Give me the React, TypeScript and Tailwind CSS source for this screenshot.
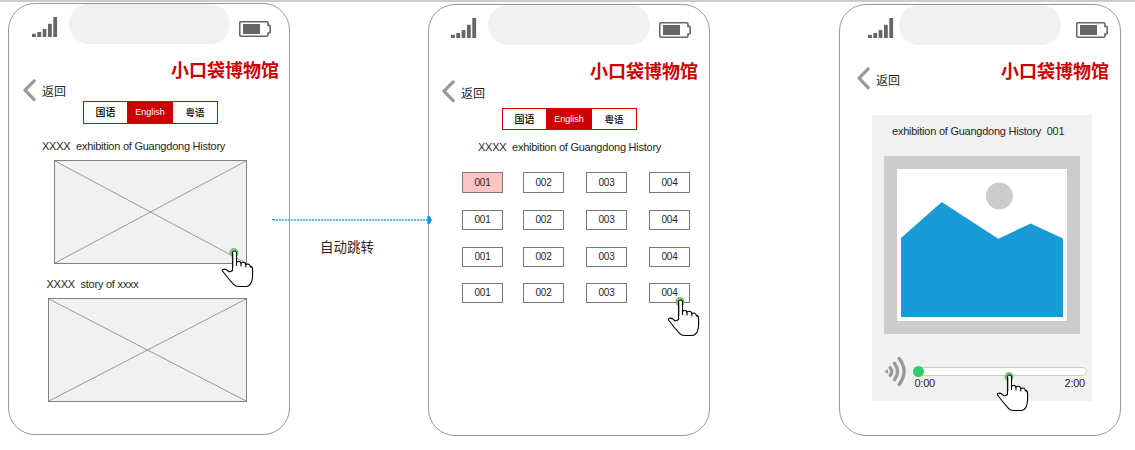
import type { ReactNode } from "react";

function Signal() {
  return (
    <svg width="26" height="21" viewBox="0 0 26 21" className="shrink-0" fill="#666">
      <rect x="0" y="16.8" width="3.9" height="3.2" />
      <rect x="5.3" y="15" width="3.9" height="5" />
      <rect x="10.7" y="12" width="3.7" height="8" />
      <rect x="16" y="6.8" width="3.8" height="13.2" />
      <rect x="21.3" y="0" width="3.8" height="20" />
    </svg>
  );
}

function Battery() {
  return (
    <svg width="33" height="17" viewBox="0 0 33 17" className="shrink-0" fill="none">
      <path d="M2 .8H27.5Q29 .8 29 2.3V4.4H30.2Q31.2 4.4 31.2 5.4V11Q31.2 12 30.2 12H29V13.7Q29 15.2 27.5 15.2H2Q.7 15.2 .7 13.7V2.3Q.7 .8 2 .8Z" stroke="#666" strokeWidth="1.6" />
      <rect x="4" y="3" width="17" height="10" fill="#666" />
    </svg>
  );
}

function Chevron() {
  return (
    <svg width="13" height="23" viewBox="0 0 13 23" className="shrink-0" fill="none">
      <path d="M11.2 1.9L2 11.2L11.2 20.7" stroke="#999" strokeWidth="3.2" strokeLinecap="round" strokeLinejoin="round" />
    </svg>
  );
}

function Hand({ className }: { className: string }) {
  return (
    <svg width="36" height="42" viewBox="0 0 36 42" className={`absolute ${className}`}>
      <circle cx="14" cy="5.7" r="4.6" fill="#7cc07c" />
      <path
        d="M12.5 6Q12.5 4 14.3 4Q16.5 4 16.5 6V18.5V16Q17 14.2 18.6 14.2Q20.9 14.2 21 17.3V19V16.2Q22 15 23.6 15.3Q25.8 15.7 25.8 18.2V20V17.8Q27.3 16.6 28.8 17.2Q30.3 17.8 30.4 20V19.4Q32.6 19.6 32.6 22.5V29Q32.3 33 31.3 35.5Q29.3 39.5 26 39.5H18.5Q15.5 39.5 13.5 37.3L8 31L2.5 24Q1.8 22.5 3.7 22.2Q6 21.8 8 24Q9.6 25.6 12.5 23.5Z"
        fill="#fff"
        stroke="#000"
        strokeWidth="1.1"
        strokeLinejoin="round"
      />
      <path d="M13.4 6.5V20" stroke="#999" strokeWidth=".8" />
    </svg>
  );
}

interface PhoneProps {
  children: ReactNode;
  className: string;
  status: string;
  notch: string;
  battery: string;
}

function Phone({ children, className, status, notch, battery }: PhoneProps) {
  return (
    <section className={`relative box-border flex h-[432px] w-[282px] shrink-0 flex-col rounded-[27px] border border-[#999] bg-white ${className}`}>
      <div className={`flex h-10 shrink-0 items-start ${status}`}>
        <div className="pt-[13px]"><Signal /></div>
        <div className={`h-full rounded-[20px] bg-[#f1f1f1] ${notch}`} />
        <div className={`pt-[17px] ${battery}`}><Battery /></div>
      </div>
      {children}
    </section>
  );
}

function Title({ className }: { className: string }) {
  return <h1 className={`h-[18px] shrink-0 whitespace-nowrap text-[18px] leading-[20px] font-bold text-[#c00] ${className}`}>小口袋博物馆</h1>;
}

function Back({ className, label }: { className: string; label: string }) {
  return (
    <div className={`flex h-[23px] shrink-0 items-start gap-[6px] ${className}`}>
      <Chevron />
      <span className={`text-[12px] leading-[14px] ${label}`}>返回</span>
    </div>
  );
}

function Tabs({ className }: { className: string }) {
  return (
    <div className={`flex w-[135px] shrink-0 border border-[#c00] text-[9px] leading-[20px] text-black ${className}`}>
      <span className="w-[43px] pt-[1px] text-center text-[10px] font-medium">国语</span>
      <span className="w-[46px] bg-[#c00] text-center text-white">English</span>
      <span className="w-[44px] pt-[1px] text-center text-[9.5px] font-medium">粤语</span>
    </div>
  );
}

function Caption({ children, className }: { children: string; className: string }) {
  return <p className={`h-3 shrink-0 whitespace-pre text-[11px] leading-[10px] tracking-[-0.24px] ${className}`}>{children}</p>;
}

function Placeholder({ className }: { className: string }) {
  return (
    <div className={`h-[104px] shrink-0 border border-[#808080] bg-[#f1f1f1] ${className}`}>
      <svg className="block h-full w-full" viewBox="0 0 100 100" preserveAspectRatio="none">
        <path d="M0 0L100 100M100 0L0 100" stroke="#999" strokeWidth="1" vectorEffect="non-scaling-stroke" />
      </svg>
    </div>
  );
}

function NumberRow({ first, className }: { first?: boolean; className: string }) {
  return (
    <div className={`grid shrink-0 grid-cols-[41px_41px_41px_41px] gap-x-[22px] text-center text-[10px] tracking-[-0.2px] ${first ? "leading-[19px]" : "leading-[17px]"} ${className}`}>
      <span className={`border border-[#797979] ${first ? "bg-[#ffc4c4]" : ""}`}>001</span>
      <span className="-ml-[2px] mr-[2px] border border-[#797979]">002</span>
      <span className="-ml-[2px] mr-[2px] border border-[#797979]">003</span>
      <span className="-ml-[2px] mr-[2px] border border-[#797979]">004</span>
    </div>
  );
}

function Landscape() {
  return (
    <svg width="170" height="152" viewBox="897 169 170 152" className="block">
      <rect x="897" y="169" width="170" height="152" fill="#fff" />
      <circle cx="999.4" cy="196" r="13.5" fill="#ccc" />
      <path d="M901 238L941.7 202L998.3 238.7L1030.7 223.4L1063 238.5V317H901Z" fill="#199bd7" />
    </svg>
  );
}

function Sound() {
  return (
    <svg width="24" height="32" viewBox="0 0 24 32" className="shrink-0" fill="none" stroke="#999" strokeWidth="3.3" strokeLinecap="round">
      <path d="M.5 15.5L3.6 13Q4.8 15.5 3.6 18Z" fill="#999" stroke="none" />
      <path d="M6.2 11.6Q9.2 15.5 6.2 19.4" />
      <path d="M10.4 7.2Q16.6 15.5 10.4 23.8" />
      <path d="M15.2 2.6Q25 15.5 15.2 28.4" />
    </svg>
  );
}

export default function App() {
  return (
    <main className="relative h-[450px] w-[1135px] overflow-hidden border-t-2 border-[#ccc] bg-white font-['Liberation_Sans','Noto_Sans_CJK_SC',sans-serif] text-[#262626]">
      <div className="flex items-start">
        <Phone className="mt-[1px] ml-[8px]" status="pl-[23px] gap-x-[9px]" notch="ml-[2px] w-[161px]" battery="">
          <Title className="mt-[17px] ml-[162px]" />
          <Back className="ml-[14px]" label="pt-[6px]" />
          <Tabs className="-mt-[1px] ml-[74px] h-[23px]" />
          <Caption className="mt-[17px] ml-[33px]">XXXX  exhibition of Guangdong History</Caption>
          <Placeholder className="mt-[7px] ml-[45px] w-[193px]" />
          <Caption className="mt-[15px] ml-[37.5px]">XXXX  story of xxxx</Caption>
          <Placeholder className="mt-[7px] ml-[39px] w-[199px]" />
          <Hand className="top-[243px] left-[211px]" />
        </Phone>

        <Phone className="mt-[2px] ml-[138px]" status="pl-[22px] gap-x-[9px]" notch="ml-[2px] w-[162px]" battery="">
          <Title className="mt-[17px] ml-[161px]" />
          <Back className="ml-[13px]" label="pt-[7px]" />
          <Tabs className="mt-[5px] ml-[73px] h-[22px]" />
          <Caption className="mt-[12px] ml-[49px]">XXXX  exhibition of Guangdong History</Caption>
          <NumberRow first className="mt-[18px] ml-[33px] h-[21px]" />
          <NumberRow className="mt-[17px] ml-[33px] h-5" />
          <NumberRow className="mt-[17px] ml-[33px] h-5" />
          <NumberRow className="mt-[16px] ml-[33px] h-5" />
          <Hand className="top-[291px] left-[237px]" />
        </Phone>

        <Phone className="mt-[2px] ml-[129px]" status="pl-[28px] gap-x-[5px]" notch="w-[162px]" battery="ml-[10px]">
          <div className="mt-[17px] flex h-[53px] shrink-0 items-start">
            <Back className="mt-[5px] ml-[17px]" label="pt-[7px]" />
            <Title className="ml-[101px]" />
          </div>
          <div className="ml-[32px] flex h-[286px] w-[220px] shrink-0 flex-col bg-[#f1f1f1]">
            <Caption className="mt-[11px] ml-[20px]">exhibition of Guangdong History  001</Caption>
            <div className="mt-[18px] ml-3 h-[178px] w-[196px] shrink-0 bg-[#ccc] p-[13px]">
              <Landscape />
            </div>
            <div className="mt-[22px] ml-3 flex items-start gap-[5px]">
              <Sound />
              <div className="mt-[11px] w-[174px]">
                <div className="flex h-[9px] items-center rounded-full border border-[#ccc] bg-white">
                  <span className="-ml-[1px] size-[11px] shrink-0 rounded-full bg-[#3c6]" />
                </div>
                <div className="mt-[1px] flex justify-between pr-[2px] pl-[1.5px] text-[11px] leading-[12px] tracking-[-0.25px]">
                  <span>0:00</span>
                  <span>2:00</span>
                </div>
              </div>
            </div>
          </div>
          <Hand className="top-[366px] left-[155px]" />
        </Phone>
      </div>

      <svg width="162" height="10" viewBox="0 0 162 10" className="absolute top-[213px] left-[272px]">
        <path d="M0 4.5H3" stroke="#0099ff" />
        <path d="M1 5H156" stroke="#33a8ff" strokeWidth="1.4" strokeDasharray="2 1" />
        <path d="M155.3 1L157.5 1L160 5L157.5 9L155.3 9Z" fill="#0099ff" />
      </svg>
      <p className="absolute top-[237px] left-[320px] text-[13.5px] leading-[18px]">自动跳转</p>
    </main>
  );
}
